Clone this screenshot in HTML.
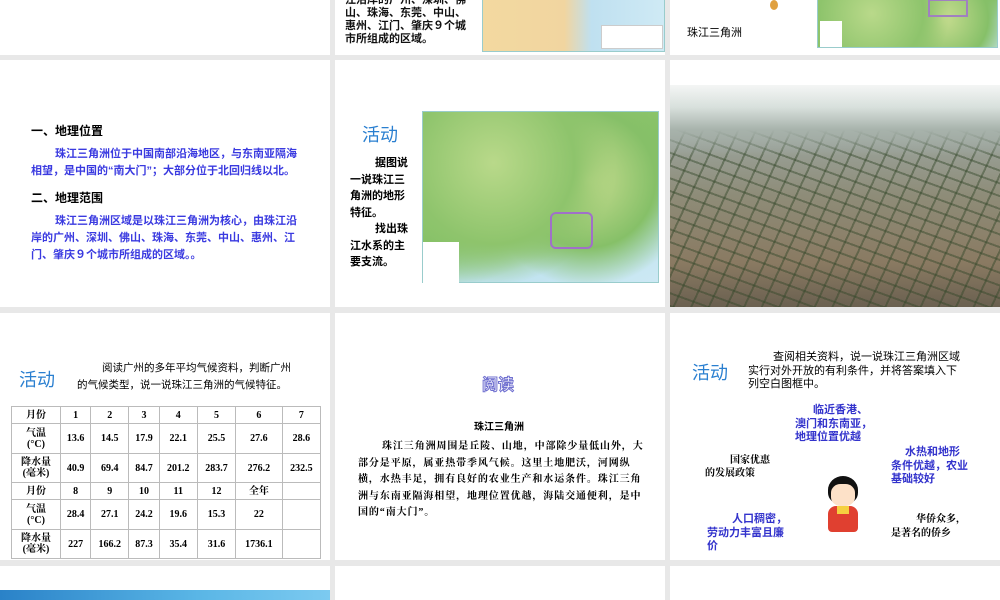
<!DOCTYPE html>
<html><head><meta charset="utf-8"><style>
*{margin:0;padding:0;box-sizing:border-box}
body{width:1000px;height:600px;background:#e8e8e8;position:relative;overflow:hidden;font-family:"Liberation Sans","Noto Sans CJK SC",sans-serif}
.s{position:absolute;background:#fff;overflow:hidden}
.a{position:absolute}
.hd{color:#2a7fd0;font-size:18px}
.bl{color:#3333cc;font-weight:bold}
.map{background:radial-gradient(circle at 30% 30%,#b9d98a 0,#8ec46c 40%,transparent 60%),radial-gradient(circle at 70% 40%,#c8dd90 0,#86c068 35%,transparent 55%),linear-gradient(160deg,#9fcf78 0,#7fbf63 55%,#bfe2ef 75%,#cde9f4 100%);border:1px solid #9cc}
table{border-collapse:collapse;font-family:"Liberation Serif","Noto Serif CJK SC",serif;font-size:10px;font-weight:bold}
td{border:1px solid #bbb;text-align:center;padding:0;line-height:11px}
</style></head><body>
<!-- row 0 -->
<div class="s" style="left:0;top:0;width:330px;height:55px"></div>
<div class="s" style="left:335px;top:0;width:330px;height:55px">
 <div class="a" style="left:10px;top:-6px;font-size:11px;line-height:13px;width:125px;font-weight:bold;color:#111">江沿岸的广州、深圳、佛山、珠海、东莞、中山、惠州、江门、肇庆９个城市所组成的区域。</div>
 <div class="a map" style="left:147px;top:-2px;width:183px;height:54px;background:linear-gradient(90deg,#f3d9a0 0,#f1d5a0 45%,#bfe0f0 60%,#cfeaf5 100%)">
  <div class="a" style="left:118px;top:26px;width:62px;height:24px;background:#fff;border:1px solid #ccc"></div>
 </div>
</div>
<div class="s" style="left:670px;top:0;width:330px;height:55px">
 <div class="a" style="left:17px;top:24px;font-size:11px">珠江三角洲</div>
 <div class="a" style="left:100px;top:0;width:8px;height:10px;background:#e0a040;border-radius:50%"></div>
 <div class="a map" style="left:147px;top:-2px;width:181px;height:50px"><div class="a" style="left:110px;top:0;width:40px;height:18px;border:2px solid #a080c0"></div><div class="a" style="left:2px;top:22px;width:22px;height:26px;background:#fff"></div></div>
</div>
<!-- row 1 -->
<div class="s" style="left:0;top:60px;width:330px;height:247px">
 <div class="a" style="left:31px;top:62px;font-size:12px;font-weight:bold">一、地理位置</div>
 <div class="a" style="left:31px;top:86px;width:272px;font-size:11px;line-height:17px;text-indent:24px;font-weight:bold;color:#3a3ae0">珠江三角洲位于中国南部沿海地区，与东南亚隔海相望，是中国的“南大门”；大部分位于北回归线以北。</div>
 <div class="a" style="left:31px;top:129px;font-size:12px;font-weight:bold">二、地理范围</div>
 <div class="a" style="left:31px;top:153px;width:272px;font-size:11px;line-height:17px;text-indent:24px;font-weight:bold;color:#3a3ae0">珠江三角洲区域是以珠江三角洲为核心，由珠江沿岸的广州、深圳、佛山、珠海、东莞、中山、惠州、江门、肇庆９个城市所组成的区域。。</div>
</div>
<div class="s" style="left:335px;top:60px;width:330px;height:247px">
 <div class="a hd" style="left:27px;top:61px">活动</div>
 <div class="a" style="left:15px;top:95px;width:60px;font-size:11px;line-height:16.5px;font-weight:bold;text-indent:25px">据图说一说珠江三角洲的地形特征。</div>
 <div class="a" style="left:15px;top:161px;width:60px;font-size:11px;line-height:16.5px;font-weight:bold;text-indent:25px">找出珠江水系的主要支流。</div>
 <div class="a map" style="left:87px;top:51px;width:237px;height:172px">
  <div class="a" style="left:127px;top:100px;width:43px;height:37px;border:2px solid #a070c8;border-radius:6px"></div>
  <div class="a" style="left:0;top:130px;width:36px;height:42px;background:#fff"></div>
 </div>
</div>
<div class="s" style="left:670px;top:60px;width:330px;height:247px">
 <div class="a" style="left:0;top:25px;width:330px;height:222px;background:
 linear-gradient(180deg,#f4f6f5 0,#d8e0dc 10%,#a8b3ac 20%,transparent 32%),
 repeating-linear-gradient(20deg,rgba(50,70,40,.45) 0 2px,transparent 2px 12px),
 repeating-linear-gradient(115deg,rgba(50,70,40,.45) 0 2px,transparent 2px 16px),
 linear-gradient(180deg,#9aa29a 25%,#8e8c78 50%,#8a7a62 80%,#6a6050 100%)"></div>
</div>
<!-- row 2 -->
<div class="s" style="left:0;top:313px;width:330px;height:247px">
 <div class="a hd" style="left:19px;top:53px">活动</div>
 <div class="a" style="left:77px;top:47px;width:218px;font-size:10.5px;line-height:16.5px;text-indent:25px">阅读广州的多年平均气候资料，判断广州的气候类型，说一说珠江三角洲的气候特征。</div>
 <table class="a" style="left:11px;top:93px;width:310px">
  <tr style="height:17px"><td style="width:49px">月份</td><td>1</td><td>2</td><td>3</td><td>4</td><td>5</td><td>6</td><td>7</td></tr>
  <tr style="height:30px"><td>气温<br>(°C)</td><td>13.6</td><td>14.5</td><td>17.9</td><td>22.1</td><td>25.5</td><td>27.6</td><td>28.6</td></tr>
  <tr style="height:29px"><td>降水量<br>(毫米)</td><td>40.9</td><td>69.4</td><td>84.7</td><td>201.2</td><td>283.7</td><td>276.2</td><td>232.5</td></tr>
  <tr style="height:17px"><td>月份</td><td>8</td><td>9</td><td>10</td><td>11</td><td>12</td><td>全年</td><td></td></tr>
  <tr style="height:30px"><td>气温<br>(°C)</td><td>28.4</td><td>27.1</td><td>24.2</td><td>19.6</td><td>15.3</td><td>22</td><td></td></tr>
  <tr style="height:29px"><td>降水量<br>(毫米)</td><td>227</td><td>166.2</td><td>87.3</td><td>35.4</td><td>31.6</td><td>1736.1</td><td></td></tr>
 </table>
</div>
<div class="s" style="left:335px;top:313px;width:330px;height:247px">
 <div class="a" style="left:147px;top:58px;font-size:16px;color:#fff;-webkit-text-stroke:1px #7070d0;font-weight:bold">阅读</div>
 <div class="a" style="left:139px;top:105px;font-size:10px;font-weight:bold">珠江三角洲</div>
 <div class="a" style="left:23px;top:126px;width:292px;font-size:10px;line-height:16.6px;text-indent:24px;font-family:'Liberation Serif','Noto Serif CJK SC',serif;font-weight:bold;letter-spacing:0.9px">珠江三角洲周围是丘陵、山地，中部除少量低山外，大部分是平原，属亚热带季风气候。这里土地肥沃，河网纵横，水热丰足，拥有良好的农业生产和水运条件。珠江三角洲与东南亚隔海相望，地理位置优越，海陆交通便利，是中国的“南大门”。</div>
</div>
<div class="s" style="left:670px;top:313px;width:330px;height:247px">
 <div class="a hd" style="left:22px;top:46px">活动</div>
 <div class="a" style="left:78px;top:38px;width:212px;font-size:11px;line-height:13.5px;text-indent:25px">查阅相关资料，说一说珠江三角洲区域实行对外开放的有利条件，并将答案填入下列空白图框中。</div>
 <div class="a bl" style="left:125px;top:91px;width:80px;font-size:11px;line-height:13.5px;text-indent:18px">临近香港、澳门和东南亚，地理位置优越</div>
 <div class="a" style="left:35px;top:141px;width:72px;font-size:10px;line-height:13px;text-indent:25px;font-family:'Liberation Serif','Noto Serif CJK SC',serif;font-weight:bold">国家优惠的发展政策</div>
 <div class="a bl" style="left:221px;top:133px;width:78px;font-size:11px;line-height:13.5px;text-indent:14px">水热和地形条件优越，农业基础较好</div>
 <div class="a" style="left:152px;top:163px;width:42px;height:58px">
  <div class="a" style="left:6px;top:0;width:30px;height:28px;background:#111;border-radius:50% 50% 40% 40%"></div>
  <div class="a" style="left:9px;top:8px;width:24px;height:22px;background:#fde1c8;border-radius:40%"></div>
  <div class="a" style="left:6px;top:30px;width:30px;height:26px;background:#e04030;border-radius:8px 8px 4px 4px"></div>
  <div class="a" style="left:15px;top:30px;width:12px;height:8px;background:#f5d040"></div>
 </div>
 <div class="a bl" style="left:37px;top:200px;width:80px;font-size:11px;line-height:13.5px;text-indent:25px">人口稠密，劳动力丰富且廉价</div>
 <div class="a" style="left:221px;top:200px;width:80px;font-size:10px;line-height:13.5px;text-indent:25px;font-family:'Liberation Serif','Noto Serif CJK SC',serif;font-weight:bold">华侨众多，是著名的侨乡</div>
</div>
<!-- row 3 -->
<div class="s" style="left:0;top:566px;width:330px;height:34px"><div class="a" style="left:0;top:24px;width:330px;height:10px;background:linear-gradient(90deg,#2a82c8,#5ab6e6 60%,#7ccaf0)"></div></div>
<div class="s" style="left:335px;top:566px;width:330px;height:34px"></div>
<div class="s" style="left:670px;top:566px;width:330px;height:34px"></div>
</body></html>
